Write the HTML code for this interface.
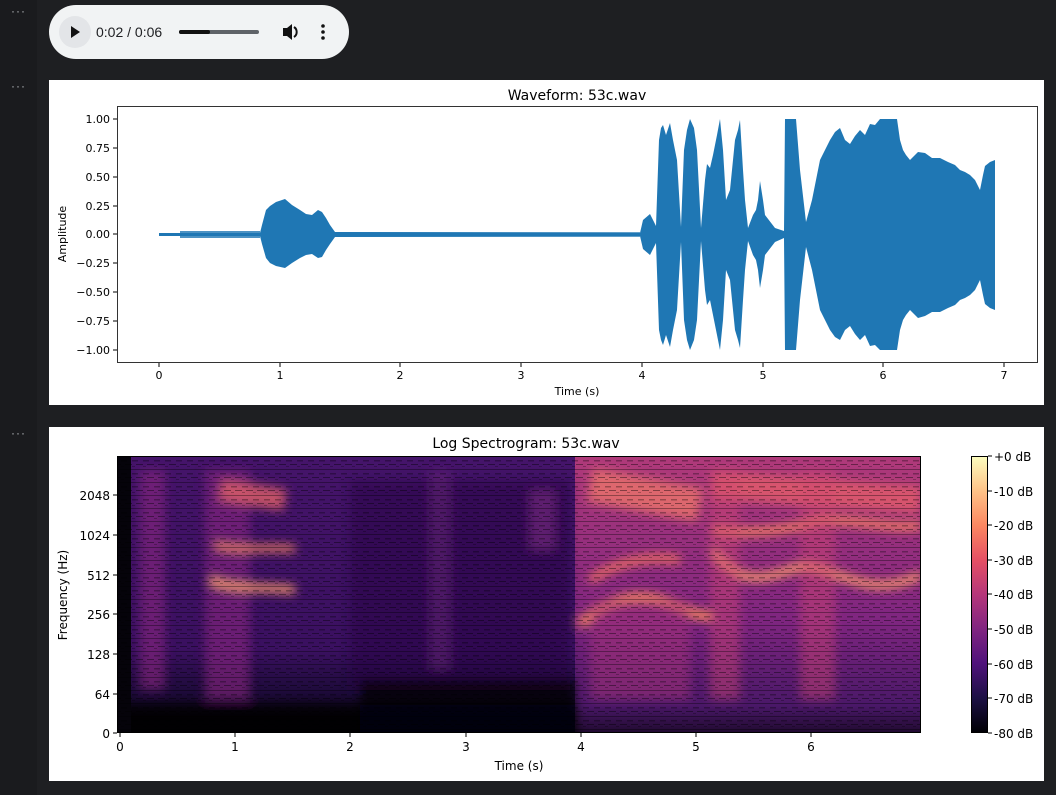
<!DOCTYPE html>
<html><head><meta charset="utf-8"><style>
html,body{margin:0;padding:0;background:#1e1f22;width:1056px;height:795px;overflow:hidden;font-family:"Liberation Sans","DejaVu Sans",sans-serif}
.gut{position:absolute;left:0;top:0;width:37px;height:795px;background:#1a1b1e}
.dots{position:absolute;left:11px;color:#b0b4b8;font-size:12px;letter-spacing:1px}
.player{position:absolute;left:49px;top:5px;width:300px;height:54px;border-radius:27px;background:#f1f3f4}
.panel{position:absolute;left:49px;background:#fff;width:995px}
svg text{font-family:"DejaVu Sans","Liberation Sans",sans-serif}
</style></head><body>
<div class="gut"></div>
<div class="dots" style="top:4px">···</div>
<div class="dots" style="top:79px">···</div>
<div class="dots" style="top:426px">···</div>
<div class="player">
<div style="position:absolute;left:10px;top:11px;width:32px;height:32px;border-radius:16px;background:#e3e5e8"></div>
<svg style="position:absolute;left:0;top:0" width="300" height="54"><path d="M22 21 L31 27 L22 33Z" fill="#111"/>
<text x="47" y="32" font-size="14" fill="#202124" style="font-family:'Liberation Sans',sans-serif">0:02 / 0:06</text>
<rect x="130" y="25" width="80" height="4" rx="2" fill="#5f6368"/><rect x="130" y="25" width="31" height="4" rx="2" fill="#111"/>
<path d="M234 23h4l5-4v16l-5-4h-4z" fill="#111"/><path d="M245 22a6 6 0 0 1 0 10" stroke="#111" stroke-width="2" fill="none"/>
<circle cx="274" cy="21" r="1.8" fill="#111"/><circle cx="274" cy="27" r="1.8" fill="#111"/><circle cx="274" cy="33" r="1.8" fill="#111"/></svg>
</div>

<div class="panel" style="top:80px;height:325px">
<svg width="995" height="325" viewBox="49 80 995 325" style="display:block">
<text x="577" y="100" font-size="14" text-anchor="middle" fill="#000">Waveform: 53c.wav</text>
<g fill="#1f77b4">
<rect x="159" y="233" width="836" height="3"/>
<rect x="180" y="231" width="80" height="7" opacity=".8"/>
<rect x="340" y="232" width="300" height="5" opacity=".7"/>
<polygon points="159,235 260,233 262,225 266,210 270,206 276,202 285,199 292,205 300,210 306,214 312,215 318,210 322,212 326,218 330,225 335,232 640,233 643,220 650,214 656,226 659,140 661,128 663,125 666,135 670,123 673,140 677,160 681,227 684,150 687,130 690,119 694,128 697,150 701,228 705,180 707,164 710,168 713,155 717,135 720,119 723,150 726,200 730,190 733,160 735,140 738,130 740,120 743,170 745,200 748,228 753,215 756,210 758,200 760,181 763,200 765,215 775,228 784,231 785,119 796,119 800,170 806,222 812,200 816,180 820,160 825,150 830,140 835,132 840,128 845,140 850,144 855,136 860,130 865,135 870,124 875,125 880,119 897,119 900,140 903,150 906,155 910,160 918,152 925,153 932,158 940,158 948,162 955,165 960,170 965,172 970,175 975,180 980,190 983,175 985,166 990,162 995,160 995,235"/>
<polygon points="159,234 260,236 262,244 266,258 270,263 276,266 285,268 292,263 300,258 306,255 312,254 318,258 322,257 326,250 330,244 335,237 640,236 643,249 650,255 656,243 659,330 661,340 663,345 666,335 670,347 673,330 677,310 681,242 684,320 687,340 690,350 694,340 697,320 701,241 705,290 707,305 710,300 713,315 717,335 720,350 723,320 726,270 730,280 733,310 735,330 738,340 740,348 743,300 745,270 748,241 753,255 756,260 758,270 760,288 763,270 765,255 775,242 784,238 785,350 796,350 800,300 806,247 812,270 816,290 820,310 825,320 830,330 835,337 840,340 845,330 850,326 855,334 860,340 865,335 870,346 875,345 880,350 897,350 900,330 903,320 906,315 910,310 918,318 925,316 932,312 940,312 948,308 955,305 960,300 965,298 970,295 975,290 980,280 983,295 985,304 990,308 995,310 995,234"/>
</g>
<rect x="117.5" y="106.5" width="920" height="256" fill="none" stroke="#333" stroke-width="1"/>
<g font-size="11" fill="#000" text-anchor="end">
<text x="110" y="123">1.00</text><text x="110" y="152">0.75</text><text x="110" y="181">0.50</text><text x="110" y="210">0.25</text><text x="110" y="238">0.00</text><text x="110" y="267">−0.25</text><text x="110" y="296">−0.50</text><text x="110" y="325">−0.75</text><text x="110" y="354">−1.00</text></g>
<g stroke="#000"><path d="M113 119h4M113 148h4M113 177h4M113 206h4M113 234h4M113 263h4M113 292h4M113 321h4M113 350h4M159 363v4M280 363v4M400 363v4M521 363v4M642 363v4M763 363v4M883 363v4M1004 363v4"/></g>
<g font-size="11" fill="#000" text-anchor="middle"><text x="159" y="379">0</text><text x="280" y="379">1</text><text x="400" y="379">2</text><text x="521" y="379">3</text><text x="642" y="379">4</text><text x="763" y="379">5</text><text x="883" y="379">6</text><text x="1004" y="379">7</text>
<text x="577" y="395">Time (s)</text>
<text transform="translate(66,234) rotate(-90)">Amplitude</text></g>
</svg></div>

<div class="panel" style="top:427px;height:354px">
<svg width="995" height="354" viewBox="49 427 995 354" style="display:block">
<defs>
<linearGradient id="cb" x1="0" y1="1" x2="0" y2="0"><stop offset="0" stop-color="#000004"/><stop offset=".125" stop-color="#1c1044"/><stop offset=".25" stop-color="#4f127b"/><stop offset=".375" stop-color="#812581"/><stop offset=".5" stop-color="#b5367a"/><stop offset=".625" stop-color="#e55064"/><stop offset=".75" stop-color="#fb8761"/><stop offset=".875" stop-color="#fec287"/><stop offset="1" stop-color="#fcfdbf"/></linearGradient>
<linearGradient id="bg" x1="0" y1="0" x2="0" y2="1"><stop offset="0" stop-color="#45146a"/><stop offset=".7" stop-color="#3a1060"/><stop offset=".86" stop-color="#1c0a38"/><stop offset=".95" stop-color="#050208"/><stop offset="1" stop-color="#050208"/></linearGradient>
<linearGradient id="hi" x1="0" y1="0" x2="0" y2="1"><stop offset="0" stop-color="#b03a7a"/><stop offset=".6" stop-color="#7e2580"/><stop offset=".9" stop-color="#4a1868"/><stop offset="1" stop-color="#200a30"/></linearGradient>
<pattern id="st" width="11" height="13" patternUnits="userSpaceOnUse"><rect y="1" width="11" height="1" fill="#000" opacity=".35"/><rect y="5" width="6" height="1.5" fill="#000" opacity=".3"/><rect x="4" y="9" width="7" height="1" fill="#000" opacity=".4"/><rect y="11" width="3" height="1" fill="#000" opacity=".25"/></pattern>
<filter id="bl" x="-20%" y="-20%" width="140%" height="140%"><feGaussianBlur stdDeviation="5"/></filter>
<clipPath id="cp"><rect x="117" y="456" width="804" height="277"/></clipPath>
</defs>
<text x="526" y="448" font-size="14" text-anchor="middle" fill="#000">Log Spectrogram: 53c.wav</text>
<g clip-path="url(#cp)">
<rect x="117" y="456" width="804" height="277" fill="url(#bg)"/>
<rect x="575" y="456" width="346" height="277" fill="url(#hi)"/>
<g filter="url(#bl)">
<rect x="350" y="480" width="220" height="210" fill="#25093f" opacity=".45"/>
<rect x="140" y="470" width="25" height="220" fill="#8a2a80" opacity=".6"/>
<rect x="205" y="470" width="45" height="230" fill="#8a2a80" opacity=".6"/>
<rect x="430" y="470" width="20" height="200" fill="#6a1d78" opacity=".5"/>
<rect x="530" y="490" width="25" height="60" fill="#7a2580" opacity=".6"/>
<path d="M210 580 C230 590 260 586 295 590" stroke="#fb9a6a" stroke-width="8" fill="none"/>
<path d="M215 545 C240 552 270 546 295 549" stroke="#f08060" stroke-width="7" fill="none"/>
<path d="M220 490 L285 500" stroke="#e06068" stroke-width="22" fill="none" opacity=".8"/>
<path d="M580 625 C610 595 640 595 660 600 C680 605 700 620 712 615" stroke="#fb8a5a" stroke-width="9" fill="none"/>
<path d="M590 580 C620 560 650 555 680 560 C700 560 712 570" stroke="#f07060" stroke-width="8" fill="none"/>
<path d="M590 485 L700 505" stroke="#f07868" stroke-width="34" fill="none" opacity=".75"/>
<path d="M712 550 C740 585 760 580 790 570 C810 560 830 575 860 582 C880 588 900 585 921 575" stroke="#fb9a6a" stroke-width="8" fill="none"/>
<path d="M712 530 C750 535 790 530 820 520 C860 520 900 530 921 525" stroke="#f58060" stroke-width="8" fill="none"/>
<path d="M712 485 C780 490 850 495 921 500" stroke="#e86068" stroke-width="28" fill="none" opacity=".75"/>
<rect x="710" y="470" width="30" height="230" fill="#d04870" opacity=".45"/>
<rect x="800" y="470" width="35" height="230" fill="#d04870" opacity=".45"/>
<rect x="590" y="600" width="100" height="100" fill="#a83078" opacity=".5"/>
<rect x="117" y="705" width="460" height="40" fill="#050208" opacity=".7"/>
<rect x="360" y="680" width="215" height="60" fill="#050208" opacity=".7"/>
</g>
<rect x="117" y="456" width="14" height="277" fill="#05030a"/>
<rect x="117" y="456" width="804" height="277" fill="url(#st)"/>
</g>
<rect x="117.5" y="456.5" width="803" height="276" fill="none" stroke="#000"/>
<rect x="971.5" y="456.5" width="16" height="276" fill="url(#cb)" stroke="#000"/>
<g stroke="#000"><path d="M113 495h4M113 535h4M113 575h4M113 614h4M113 654h4M113 694h4M113 733h4M120 733v4M235 733v4M350 733v4M466 733v4M581 733v4M696 733v4M811 733v4M988 456h4M988 491h4M988 525h4M988 560h4M988 594h4M988 629h4M988 664h4M988 698h4M988 733h4"/></g>
<g font-size="12" fill="#000" text-anchor="end"><text x="110" y="500">2048</text><text x="110" y="540">1024</text><text x="110" y="580">512</text><text x="110" y="619">256</text><text x="110" y="659">128</text><text x="110" y="699">64</text><text x="110" y="738">0</text></g>
<g font-size="12" fill="#000" text-anchor="middle"><text x="120" y="751">0</text><text x="235" y="751">1</text><text x="350" y="751">2</text><text x="466" y="751">3</text><text x="581" y="751">4</text><text x="696" y="751">5</text><text x="811" y="751">6</text>
<text x="519" y="770">Time (s)</text><text transform="translate(67,595) rotate(-90)">Frequency (Hz)</text></g>
<g font-size="12" fill="#000"><text x="994" y="461">+0 dB</text><text x="994" y="496">-10 dB</text><text x="994" y="530">-20 dB</text><text x="994" y="565">-30 dB</text><text x="994" y="599">-40 dB</text><text x="994" y="634">-50 dB</text><text x="994" y="669">-60 dB</text><text x="994" y="703">-70 dB</text><text x="994" y="738">-80 dB</text></g>
</svg></div>
</body></html>
